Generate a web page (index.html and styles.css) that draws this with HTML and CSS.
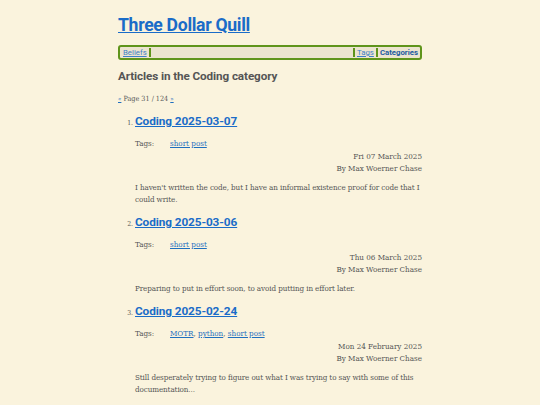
FILE: index.html
```html
<!DOCTYPE html>
<html>
<head>
<meta charset="utf-8">
<link rel="stylesheet" href="styles.css">
</head>
<body>
<div class="page">
  <h1 class="site-title"><a href="#">Three Dollar Quill</a></h1>
  <nav class="nav">
    <a class="nav-item" href="#">Beliefs</a>
    <span class="nav-fill"></span>
    <a class="nav-item sep" href="#">Tags</a>
    <a class="nav-item sep current" href="#">Categories</a>
  </nav>
  <h2 class="cat-heading">Articles in the Coding category</h2>
  <p class="pager"><a href="#">«</a> Page 31 / 124 <a href="#">»</a></p>
  <ol class="articles">
    <li class="article">
      <h3 class="art-title"><a href="#">Coding 2025-03-07</a></h3>
      <div class="tags"><span class="tags-label">Tags:</span><span><a href="#">short post</a></span></div>
      <div class="meta">Fri 07 March 2025</div>
      <div class="meta">By Max Woerner Chase</div>
      <p class="summary">I haven't written the code, but I have an informal existence proof for code that I could write.</p>
    </li>
    <li class="article">
      <h3 class="art-title"><a href="#">Coding 2025-03-06</a></h3>
      <div class="tags"><span class="tags-label">Tags:</span><span><a href="#">short post</a></span></div>
      <div class="meta">Thu 06 March 2025</div>
      <div class="meta">By Max Woerner Chase</div>
      <p class="summary">Preparing to put in effort soon, to avoid putting in effort later.</p>
    </li>
    <li class="article">
      <h3 class="art-title"><a href="#">Coding 2025-02-24</a></h3>
      <div class="tags"><span class="tags-label">Tags:</span><span><a href="#">MOTR</a>, <a href="#">python</a>, <a href="#">short post</a></span></div>
      <div class="meta">Mon 24 February 2025</div>
      <div class="meta">By Max Woerner Chase</div>
      <p class="summary">Still desperately trying to figure out what I was trying to say with some of this documentation...</p>
    </li>
  </ol>
</div>
</body>
</html>
```

FILE: styles.css
```css
html, body {
  margin: 0;
  padding: 0;
  background: #faf3dd;
}
body {
  font-family: "DejaVu Serif", "Liberation Serif", serif;
  font-stretch: condensed;
  font-size: 8px;
  line-height: 12px;
  color: #555;
}
a { color: #1f6fbf; }
.page {
  width: 304px;
  margin: 0 auto;
  padding-top: 14px;
}
.site-title {
  margin: 0 0 9px;
  font-family: Roboto, "Noto Sans", sans-serif;
  font-stretch: normal;
  font-size: 17.6px;
  line-height: 22px;
  font-weight: 700;
  letter-spacing: -0.3px;
}
.site-title a { color: #1a6cc8; }
.nav {
  display: flex;
  align-items: center;
  height: 11px;
  border: 2px solid #5f941b;
  border-radius: 3px;
  background: #ece4cf;
  padding: 0 1px;
  font-family: Roboto, "Noto Sans", sans-serif;
  font-stretch: normal;
  font-size: 7.8px;
  line-height: 9px;
}
.nav-item {
  color: #3d7fc7;
  padding: 0 2px;
}
.nav-item:first-child { border-right: 2px solid #5f941b; }
.nav-fill { flex: 1; }
.nav-item.sep { border-left: 2px solid #5f941b; }
.nav-item.current {
  font-weight: 700;
  color: #1d5aa0;
  text-decoration: none;
  padding-right: 1px;
}
.cat-heading {
  margin: 8px 0 0;
  font-family: Roboto, "Noto Sans", sans-serif;
  font-stretch: normal;
  font-size: 11.7px;
  line-height: 16px;
  font-weight: 700;
  color: #555;
  letter-spacing: -0.1px;
}
.pager {
  margin: 10px 0 0;
  font-size: 7.2px;
  line-height: 10px;
}
.pager a { font-size: 6.2px; }
.articles {
  margin: 9px 0 0;
  padding-left: 17px;
}
.article {
  font-size: 6.8px;
}
.article + .article { margin-top: 8px; }
.article > * { font-size: 8px; }
.art-title {
  margin: 0;
  font-family: Roboto, "Noto Sans", sans-serif;
  font-stretch: normal;
  font-size: 11.8px;
  line-height: 16px;
  font-weight: 700;
  letter-spacing: -0.1px;
}
.art-title a { color: #1a6cc8; }
.tags {
  margin: 9px 0 1px;
  display: flex;
}
.tags-label { width: 35px; }
.meta { text-align: right; }
.summary {
  margin: 7px 0 0;
  letter-spacing: -0.1px;
}
```
